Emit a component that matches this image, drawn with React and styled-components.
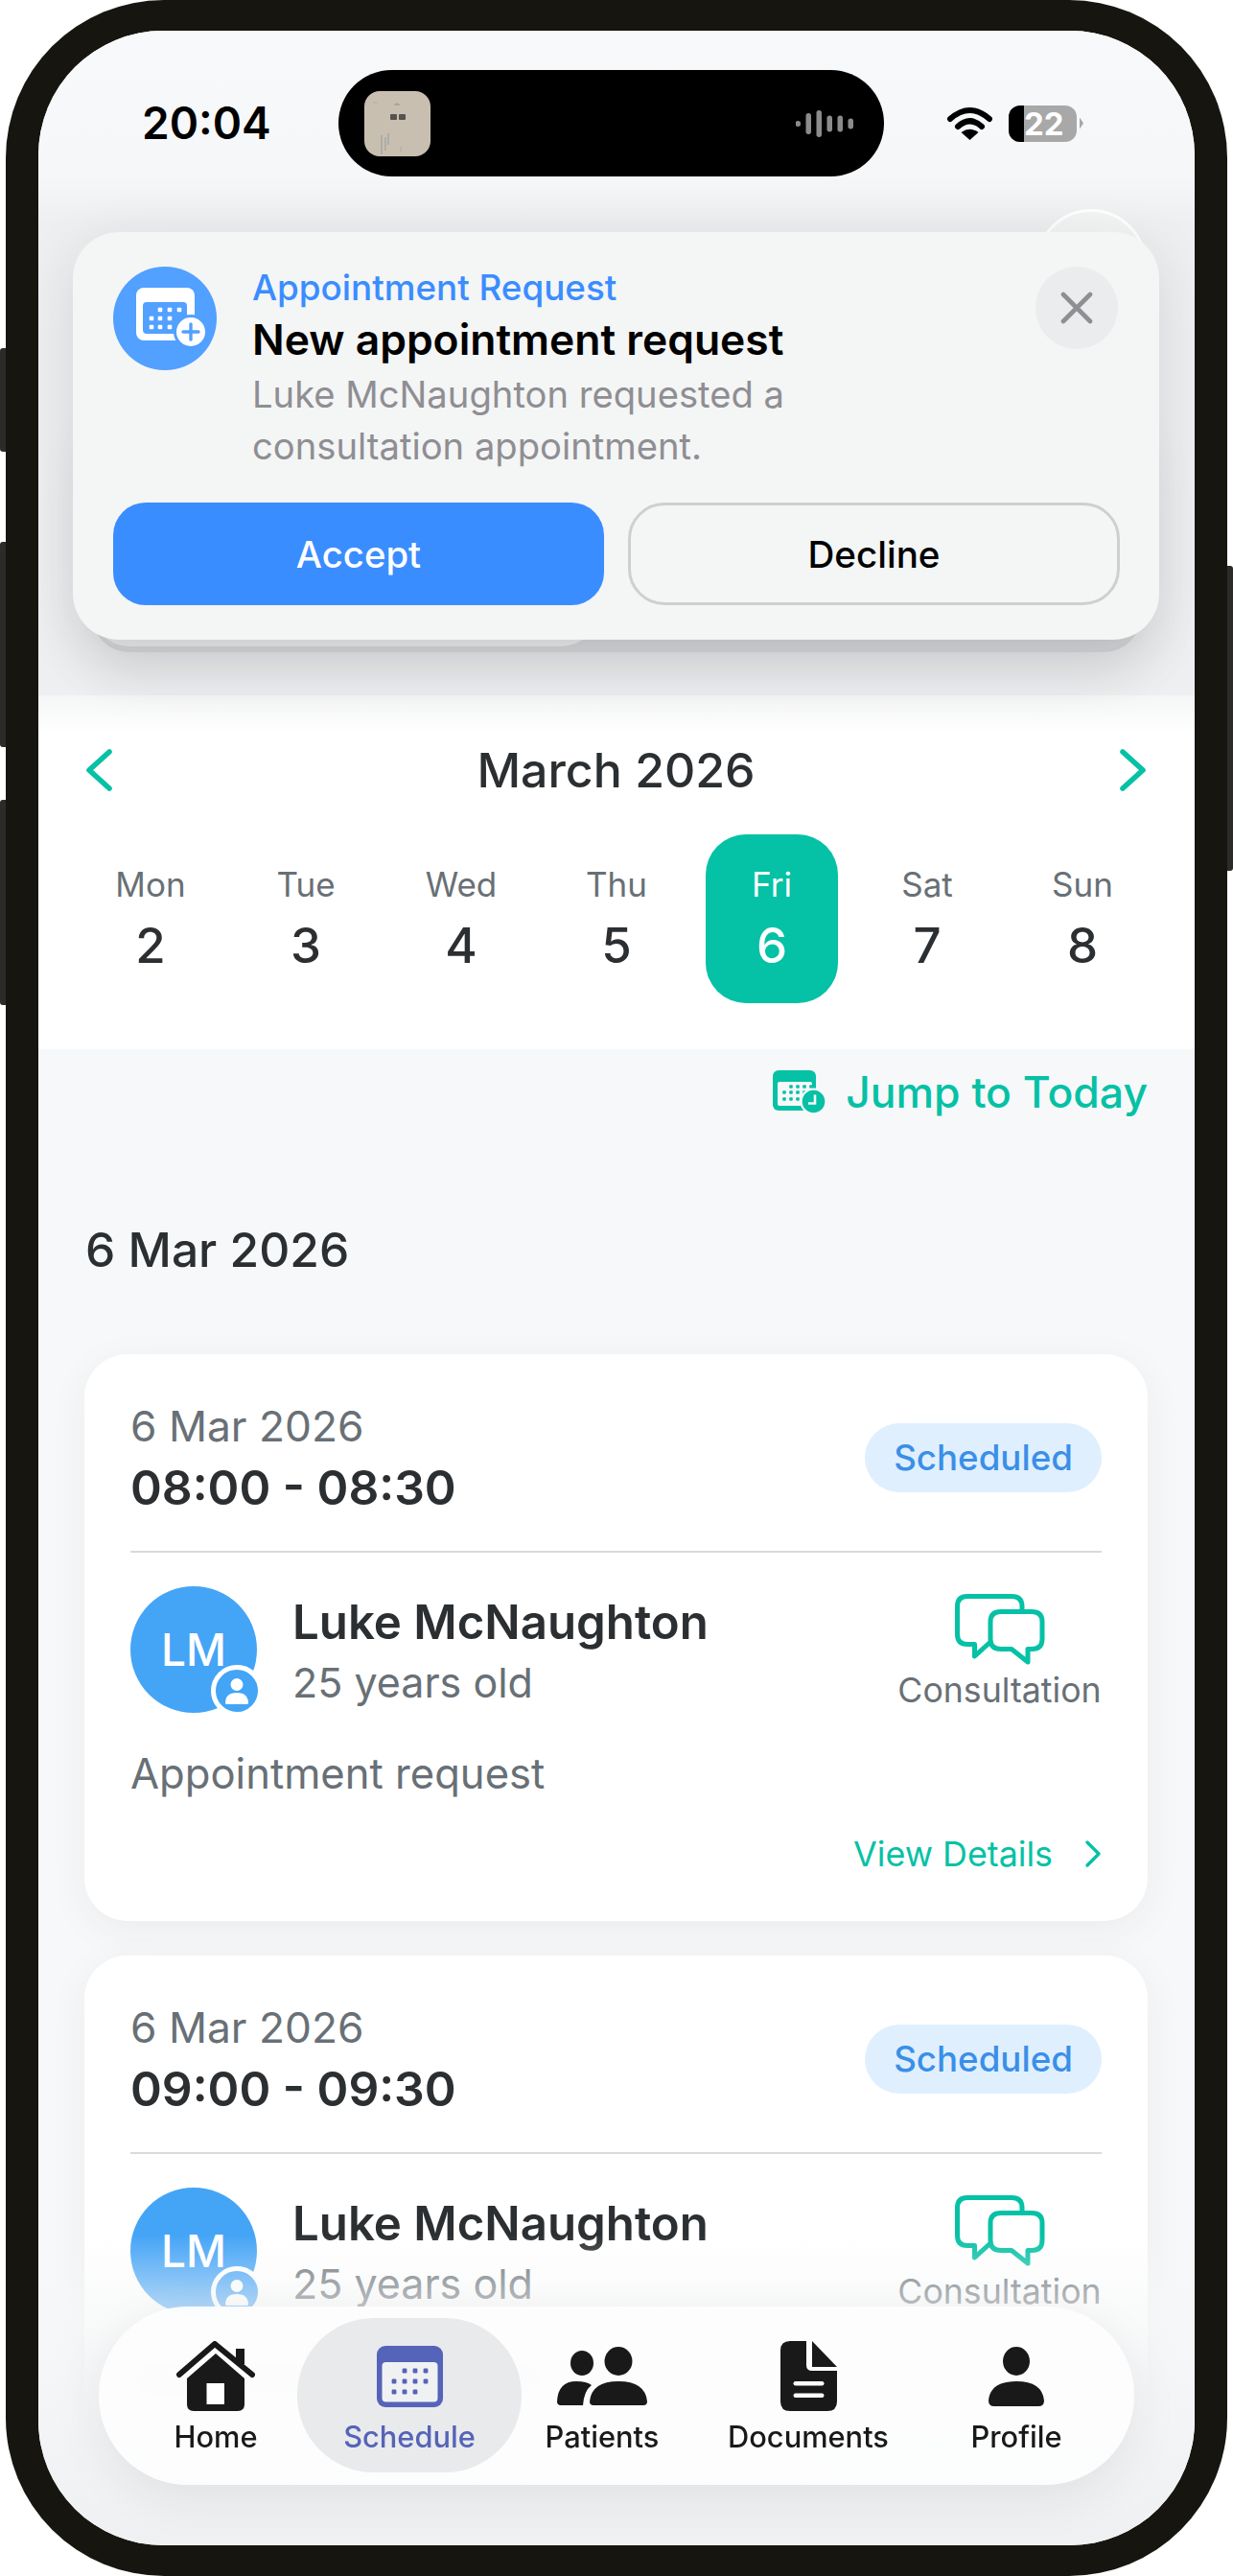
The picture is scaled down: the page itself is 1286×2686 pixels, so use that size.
import React from 'react';
import styled, { createGlobalStyle } from 'styled-components';

const teal = '#05c1a5';
const blue = '#3a8dff';
const ink = '#2c2f31';
const slate = '#687076';

const GlobalStyle = createGlobalStyle`
    html, body {
        margin: 0;
        padding: 0;
        background: #fff;
    }
    * {
        box-sizing: border-box;
    }
    body {
        font-family: Inter, "Noto Sans", sans-serif;
    }
`;

const days = [
    { name: 'Mon', num: 2 },
    { name: 'Tue', num: 3 },
    { name: 'Wed', num: 4 },
    { name: 'Thu', num: 5 },
    { name: 'Fri', num: 6, active: true },
    { name: 'Sat', num: 7 },
    { name: 'Sun', num: 8 },
];

const appointments = ['08:00 - 08:30', '09:00 - 09:30'];

function WifiIcon() {
    return (
        <svg width="47" height="35" viewBox="0 0 47 35">
            <path d="M3 13 Q23.5 -5 44 13" fill="none" stroke="#000" strokeWidth="6" strokeLinecap="round" />
            <path d="M11 21 Q23.5 9.5 36 21" fill="none" stroke="#000" strokeWidth="6" strokeLinecap="round" />
            <path d="M23.5 35 L14.5 27 Q23.5 20.5 32.5 27 Z" fill="#000" />
        </svg>
    );
}

function WaveIcon() {
    const bars = [[2, 6], [13, 22], [24, 28], [35, 17], [46, 17], [57, 11]];
    return (
        <svg width="62" height="30" viewBox="0 0 62 30">
            {bars.map(([x, h]) => (
                <rect key={x} x={x - 2.5} y={15 - h / 2} width="5.5" height={h} rx="2.7" fill="#8b8b8b" />
            ))}
        </svg>
    );
}

function ThumbArt() {
    return (
        <svg width="69" height="68" viewBox="0 0 69 68">
            <rect x="27" y="24" width="7" height="6" rx="1" fill="#55524f" />
            <rect x="36" y="24" width="7" height="6" rx="1" fill="#55524f" />
            <path d="M31 14 h6 M34 12 v3" stroke="#a8a39a" strokeWidth="1.4" />
            <path d="M18 66 V46 M22 62 V48 M25 56 V44" stroke="#a9a8a6" strokeWidth="1.6" />
            <path d="M38 58 v5 M9 12 h5" stroke="#b3ac9f" strokeWidth="1.2" />
        </svg>
    );
}

function CalendarPlusIcon() {
    const dots = [[49, 45], [59, 45], [69, 45], [40, 54], [49, 54], [59, 54], [40, 63], [49, 63], [59, 63]];
    return (
        <svg width="108" height="108" viewBox="0 0 108 108">
            <circle cx="54" cy="54" r="54" fill="#52a0ff" />
            <rect x="24" y="22" width="61" height="55" rx="8" fill="#fff" />
            <rect x="31" y="37" width="46" height="33" rx="4" fill="#52a0ff" />
            {dots.map(([x, y]) => (
                <rect key={`${x}-${y}`} x={x - 2.3} y={y - 2.3} width="4.6" height="4.6" rx="1" fill="#fff" />
            ))}
            <circle cx="81" cy="68" r="18" fill="#52a0ff" />
            <circle cx="81" cy="68" r="15" fill="#fff" />
            <path d="M81 60 V76 M73 68 H89" stroke="#52a0ff" strokeWidth="3.4" strokeLinecap="round" />
        </svg>
    );
}

function CloseIcon() {
    return (
        <svg width="34" height="34" viewBox="0 0 34 34">
            <path d="M3 3 L31 31 M31 3 L3 31" stroke="#8e8e93" strokeWidth="4.6" strokeLinecap="round" />
        </svg>
    );
}

function Chevron({ left, size = 44, width = 27, stroke = 5.6 }) {
    return (
        <svg width={width} height={size} viewBox={`0 0 ${width} ${size}`}>
            <path
                d={left
                    ? `M${width - 3} 3 L3 ${size / 2} L${width - 3} ${size - 3}`
                    : `M3 3 L${width - 3} ${size / 2} L3 ${size - 3}`}
                fill="none"
                stroke={teal}
                strokeWidth={stroke}
                strokeLinecap="round"
                strokeLinejoin="round"
            />
        </svg>
    );
}

function JumpIcon() {
    const dots = [[19, 17], [26, 17], [33, 17], [40, 17], [12, 23], [19, 23], [26, 23], [33, 23], [12, 30], [19, 30], [26, 30]];
    return (
        <svg width="56" height="46" viewBox="0 0 56 46">
            <rect x="0" y="0" width="45" height="42" rx="6" fill={teal} />
            <rect x="5" y="12" width="36" height="25" rx="2" fill="#f7f8fa" />
            {dots.map(([x, y]) => (
                <rect key={`${x}-${y}`} x={x - 1.8} y={y - 1.8} width="3.6" height="3.6" rx="1" fill={teal} />
            ))}
            <circle cx="42.5" cy="32.5" r="14" fill="#f7f8fa" />
            <circle cx="42.5" cy="32.5" r="11.8" fill={teal} />
            <path d="M44 25.5 V34.5 H37" fill="none" stroke="#f7f8fa" strokeWidth="2.6" />
        </svg>
    );
}

function ChatIcon() {
    return (
        <svg width="94" height="74" viewBox="0 0 94 74">
            <g fill="none" stroke={teal} strokeWidth="5" strokeLinecap="round" strokeLinejoin="round">
                <path d="M70 17 V13 Q70 2.5 59 2.5 H13 Q2.5 2.5 2.5 13 V42 Q2.5 52.5 13 52.5 H20.5 V65 L36 51" />
                <path d="M48 18.5 H80 Q91 18.5 91 29 V47 Q91 57.5 80 57.5 H76 V71 L59 57.5 H48 Q37 57.5 37 47 V29 Q37 18.5 48 18.5 Z" />
            </g>
        </svg>
    );
}

function PersonBadgeIcon() {
    return (
        <svg width="26" height="28" viewBox="0 0 26 28">
            <circle cx="13" cy="7.5" r="6.5" fill="#fff" />
            <path d="M1 27 Q1 16 13 16 Q25 16 25 27 Q25 28 23 28 H3 Q1 28 1 27 Z" fill="#fff" />
        </svg>
    );
}

function HomeIcon() {
    return (
        <svg width="82" height="73" viewBox="0 0 82 73">
            <path d="M41 13 L71 39 V66 Q71 73 64 73 H18 Q11 73 11 66 V39 Z" fill="#191919" />
            <rect x="62" y="8" width="9" height="16" fill="#191919" />
            <path d="M3 35 L40 3 L79 35" fill="none" stroke="#191919" strokeWidth="6" strokeLinecap="round" strokeLinejoin="round" />
            <rect x="31.5" y="44" width="18.5" height="22" fill="#fff" />
        </svg>
    );
}

function ScheduleIcon() {
    const dots = [[29, 26], [40, 26], [51, 26], [18, 37], [29, 37], [40, 37], [51, 37], [18, 48], [29, 48], [40, 48]];
    return (
        <svg width="69" height="64" viewBox="0 0 69 64">
            <rect x="0" y="0" width="69" height="64" rx="9" fill="#5563b8" />
            <rect x="5.5" y="17" width="58" height="41.5" rx="4" fill="#f0f1f3" />
            {dots.map(([x, y]) => (
                <rect key={`${x}-${y}`} x={x - 2.4} y={y - 2.4} width="4.8" height="4.8" rx="1.2" fill="#5563b8" />
            ))}
        </svg>
    );
}

function PatientsIcon() {
    return (
        <svg width="95" height="61" viewBox="0 0 95 61">
            <ellipse cx="26" cy="17" rx="12" ry="13" fill="#191919" />
            <ellipse cx="64" cy="15" rx="14.5" ry="15" fill="#191919" />
            <path d="M0 57 Q1 36 20 36 Q31 36 36 40 Q28 46 27 61 H4 Q0 61 0 57 Z" fill="#191919" />
            <path d="M34 57 Q36 36 64 36 Q92 36 94 57 Q94 61 90 61 H38 Q34 61 34 57 Z" fill="#191919" />
        </svg>
    );
}

function DocumentIcon() {
    return (
        <svg width="59" height="73" viewBox="0 0 59 73">
            <path d="M10 0 H27 V25 Q27 31 33 31 H59 V63 Q59 73 49 73 H10 Q0 73 0 63 V10 Q0 0 10 0 Z" fill="#191919" />
            <path d="M33 0 L59 27 H33 Z" fill="#191919" />
            <rect x="13.5" y="42" width="32" height="4.6" rx="2.3" fill="#fff" />
            <rect x="13.5" y="54.5" width="32" height="4.6" rx="2.3" fill="#fff" />
        </svg>
    );
}

function ProfileIcon() {
    return (
        <svg width="58" height="62" viewBox="0 0 58 62">
            <ellipse cx="29" cy="15" rx="14" ry="15" fill="#191919" />
            <path d="M0 56 Q2 36 29 36 Q56 36 58 56 Q58 62 52 62 H6 Q0 62 0 56 Z" fill="#191919" />
        </svg>
    );
}

const navItems = [
    { label: 'Home', icon: <HomeIcon /> },
    { label: 'Schedule', icon: <ScheduleIcon />, active: true },
    { label: 'Patients', icon: <PatientsIcon /> },
    { label: 'Documents', icon: <DocumentIcon /> },
    { label: 'Profile', icon: <ProfileIcon /> },
];

function AppointmentCard({ time }) {
    return (
        <Card>
            <CardHead>
                <div>
                    <CardDate>6 Mar 2026</CardDate>
                    <CardTime>{time}</CardTime>
                </div>
                <Badge>Scheduled</Badge>
            </CardHead>
            <Divider />
            <PatientRow>
                <Avatar>
                    LM
                    <AvatarBadge><PersonBadgeIcon /></AvatarBadge>
                </Avatar>
                <PatientInfo>
                    <PatientName>Luke McNaughton</PatientName>
                    <PatientAge>25 years old</PatientAge>
                </PatientInfo>
                <TypeBox>
                    <ChatIcon />
                    <TypeLabel>Consultation</TypeLabel>
                </TypeBox>
            </PatientRow>
            <CardNote>Appointment request</CardNote>
            <DetailsLink>
                View Details
                <Chevron size={30} width={18} stroke={3.4} />
            </DetailsLink>
        </Card>
    );
}

export default function App() {
    return (
        <Frame>
            <GlobalStyle />
            <SideButton $top={363} $height={108} />
            <SideButton $top={565} $height={214} />
            <SideButton $top={834} $height={214} />
            <PowerButton />
            <Phone>
                <Screen>
                    <TopArea>
                        <StatusBar>
                            <Clock>20:04</Clock>
                            <Island>
                                <IslandThumb>
                                    <ThumbArt />
                                </IslandThumb>
                                <WaveIcon />
                            </Island>
                            <StatusIcons>
                                <WifiIcon />
                                <Battery>
                                    <BatteryFill />
                                    <BatteryText>22</BatteryText>
                                </Battery>
                                <BatteryTip />
                            </StatusIcons>
                        </StatusBar>
                    </TopArea>

                    <Calendar>
                        <MonthRow>
                            <Chevron left />
                            <MonthTitle>March 2026</MonthTitle>
                            <Chevron />
                        </MonthRow>
                        <DayGrid>
                            {days.map((d) => (
                                <DayCell key={d.name} $active={d.active}>
                                    <DayName $active={d.active}>{d.name}</DayName>
                                    <DayNum $active={d.active}>{d.num}</DayNum>
                                </DayCell>
                            ))}
                        </DayGrid>
                    </Calendar>

                    <Content>
                        <JumpRow>
                            <JumpIcon />
                            <JumpText>Jump to Today</JumpText>
                        </JumpRow>
                        <DateHeading>6 Mar 2026</DateHeading>
                        <CardList>
                            {appointments.map((t) => (
                                <AppointmentCard key={t} time={t} />
                            ))}
                        </CardList>
                    </Content>

                    <PeekCircle />
                    <BackCard />
                    <BackCardLip />
                    <Notice>
                        <NoticeTop>
                            <CalendarPlusIcon />
                            <NoticeText>
                                <NoticeKicker>Appointment Request</NoticeKicker>
                                <NoticeTitle>New appointment request</NoticeTitle>
                                <NoticeBody>
                                    Luke McNaughton requested a<br />
                                    consultation appointment.
                                </NoticeBody>
                            </NoticeText>
                            <CloseButton><CloseIcon /></CloseButton>
                        </NoticeTop>
                        <NoticeActions>
                            <AcceptButton>Accept</AcceptButton>
                            <DeclineButton>Decline</DeclineButton>
                        </NoticeActions>
                    </Notice>

                    <BottomFade />
                    <TabBar>
                        {navItems.map((item) => (
                            <TabItem key={item.label} $active={item.active}>
                                <TabIcon>{item.icon}</TabIcon>
                                <TabLabel $active={item.active}>{item.label}</TabLabel>
                            </TabItem>
                        ))}
                    </TabBar>
                </Screen>
            </Phone>
        </Frame>
    );
}

const Frame = styled.div`
    position: relative;
    width: 1286px;
    height: 2686px;
    padding: 0 6px;
    background: #fff;
    overflow: hidden;
`;

const SideButton = styled.div`
    position: absolute;
    left: 0;
    top: ${(p) => p.$top}px;
    width: 8px;
    height: ${(p) => p.$height}px;
    background: #2b2b29;
    border-radius: 3px 0 0 3px;
`;

const PowerButton = styled.div`
    position: absolute;
    right: 0;
    top: 590px;
    width: 8px;
    height: 318px;
    background: #2b2b29;
    border-radius: 0 3px 3px 0;
`;

const Phone = styled.div`
    position: relative;
    width: 1274px;
    height: 2686px;
    padding: 32px 34px;
    background: #161510;
    border-radius: 165px;
`;

const Screen = styled.div`
    position: relative;
    display: flex;
    flex-direction: column;
    height: 2622px;
    background: #f7f8fa;
    border-radius: 130px;
    overflow: hidden;
`;

const TopArea = styled.div`
    flex: none;
    height: 693px;
    background: linear-gradient(#f8f9fb 0, #f6f7f8 150px, #eeeff0 200px);
`;

const StatusBar = styled.div`
    display: flex;
    align-items: center;
    padding: 41px 0 0 108px;
`;

const Clock = styled.div`
    width: 205px;
    font-size: 46px;
    line-height: 111px;
    font-weight: 600;
    color: #000;
`;

const Island = styled.div`
    display: flex;
    align-items: center;
    justify-content: space-between;
    width: 569px;
    height: 111px;
    padding: 0 30px 0 27px;
    background: #000;
    border-radius: 56px;
`;

const IslandThumb = styled.div`
    width: 69px;
    height: 68px;
    background: #c8bfb0;
    border-radius: 16px;
    overflow: hidden;
`;

const StatusIcons = styled.div`
    display: flex;
    align-items: center;
    margin-left: 66px;
`;

const Battery = styled.div`
    position: relative;
    display: flex;
    align-items: center;
    width: 71px;
    height: 38px;
    margin-left: 17px;
    padding-left: 16px;
    background: #a8a8a8;
    border-radius: 12px;
    overflow: hidden;
`;

const BatteryFill = styled.div`
    position: absolute;
    left: 0;
    top: 0;
    bottom: 0;
    width: 16px;
    background: #000;
`;

const BatteryText = styled.span`
    position: relative;
    font-size: 33px;
    line-height: 38px;
    font-weight: 700;
    color: #fff;
`;

const BatteryTip = styled.div`
    width: 4px;
    height: 12px;
    margin-left: 3px;
    background: #a8a8a8;
    clip-path: polygon(0 0, 100% 50%, 0 100%);
`;

const Calendar = styled.section`
    flex: none;
    height: 369px;
    padding-top: 46px;
    background: linear-gradient(#f5f6f6 0, #fff 40px);
`;

const MonthRow = styled.div`
    display: flex;
    align-items: center;
    justify-content: space-between;
    height: 64px;
    padding: 0 51px 0 50px;
`;

const MonthTitle = styled.h2`
    margin: 0;
    font-size: 50px;
    line-height: 64px;
    font-weight: 500;
    color: ${ink};
`;

const DayGrid = styled.div`
    display: grid;
    grid-template-columns: repeat(7, 162px);
    margin-top: 35px;
    padding-left: 36px;
`;

const DayCell = styled.div`
    display: flex;
    flex-direction: column;
    align-items: center;
    justify-self: center;
    width: 138px;
    height: 176px;
    padding-top: 30px;
    background: ${(p) => (p.$active ? teal : 'transparent')};
    border-radius: 42px;
`;

const DayName = styled.span`
    font-size: 35px;
    line-height: 44px;
    color: ${(p) => (p.$active ? '#fff' : slate)};
`;

const DayNum = styled.span`
    margin-top: 10px;
    font-size: 51px;
    line-height: 64px;
    font-weight: 500;
    color: ${(p) => (p.$active ? '#fff' : ink)};
`;

const Content = styled.main`
    flex: none;
    padding: 22px 49px 0 48px;
`;

const JumpRow = styled.div`
    display: flex;
    align-items: center;
    justify-content: flex-end;
    gap: 20px;
    height: 46px;
`;

const JumpText = styled.span`
    font-size: 44.5px;
    line-height: 46px;
    font-weight: 500;
    color: ${teal};
`;

const DateHeading = styled.h3`
    margin: 111px 0 0;
    padding-left: 1px;
    font-size: 49.7px;
    line-height: 60px;
    font-weight: 500;
    color: ${ink};
`;

const CardList = styled.div`
    display: flex;
    flex-direction: column;
    gap: 36px;
    margin-top: 79px;
`;

const Card = styled.article`
    height: 591px;
    padding: 42.5px 48px 0;
    background: #fff;
    border-radius: 45px;
    box-shadow: 0 10px 40px rgba(40, 45, 50, 0.06);
`;

const CardHead = styled.div`
    display: flex;
    align-items: center;
    justify-content: space-between;
`;

const CardDate = styled.div`
    font-size: 44.3px;
    line-height: 64px;
    color: ${slate};
`;

const CardTime = styled.div`
    font-size: 49.8px;
    line-height: 64px;
    font-weight: 600;
    color: ${ink};
`;

const Badge = styled.span`
    display: flex;
    align-items: center;
    justify-content: center;
    width: 247px;
    height: 72px;
    margin-top: 2px;
    background: #e0effe;
    border-radius: 36px;
    font-size: 36.7px;
    font-weight: 500;
    color: #3a8fe8;
`;

const Divider = styled.hr`
    height: 2px;
    margin: 34px 0 35px;
    border: 0;
    background: #d8dadc;
`;

const PatientRow = styled.div`
    display: flex;
    align-items: flex-start;
    gap: 37px;
`;

const Avatar = styled.div`
    position: relative;
    display: flex;
    align-items: center;
    justify-content: center;
    flex: none;
    width: 132px;
    height: 132px;
    background: #44a4f6;
    border-radius: 50%;
    font-size: 46px;
    font-weight: 500;
    color: #fff;
`;

const AvatarBadge = styled.div`
    position: absolute;
    left: 84px;
    top: 82px;
    display: flex;
    align-items: center;
    justify-content: center;
    width: 54px;
    height: 54px;
    background: #44a4f6;
    border: 5px solid #fff;
    border-radius: 50%;
`;

const PatientInfo = styled.div`
    flex: 1;
    padding-top: 5px;
`;

const PatientName = styled.div`
    font-size: 49.2px;
    line-height: 64px;
    font-weight: 600;
    color: ${ink};
`;

const PatientAge = styled.div`
    margin-top: 1px;
    font-size: 43px;
    line-height: 60px;
    color: ${slate};
`;

const TypeBox = styled.div`
    display: flex;
    flex-direction: column;
    align-items: center;
    width: 213px;
    padding-top: 8px;
`;

const TypeLabel = styled.span`
    margin-top: 4px;
    font-size: 35.7px;
    line-height: 44px;
    color: ${slate};
`;

const CardNote = styled.div`
    margin-top: 34px;
    font-size: 43.6px;
    line-height: 60px;
    color: ${slate};
`;

const DetailsLink = styled.div`
    display: flex;
    align-items: center;
    justify-content: flex-end;
    gap: 33px;
    margin-top: 31px;
    font-size: 35.8px;
    line-height: 44px;
    color: ${teal};
`;

const PeekCircle = styled.div`
    position: absolute;
    left: 1040px;
    top: 186px;
    width: 116px;
    height: 116px;
    background: #f3f4f4;
    border: 3px solid #fff;
    border-radius: 50%;
`;

const BackCard = styled.div`
    position: absolute;
    left: 55px;
    top: 400px;
    width: 1096px;
    height: 248px;
    background: #cfd0d2;
    border-radius: 40px;
    box-shadow: 0 20px 60px rgba(30, 35, 45, 0.1);
`;

const BackCardLip = styled.div`
    position: absolute;
    left: 55px;
    top: 400px;
    width: 530px;
    height: 242px;
    background: #e3e4e5;
    border-radius: 40px;
`;

const Notice = styled.div`
    position: absolute;
    left: 36px;
    top: 210px;
    width: 1133px;
    height: 425px;
    padding: 36px 41px 0 42px;
    background: #f4f5f5;
    border-radius: 48px;
    box-shadow: 0 14px 60px rgba(30, 35, 45, 0.12);
`;

const NoticeTop = styled.div`
    display: flex;
    align-items: flex-start;
    gap: 37px;
`;

const NoticeText = styled.div`
    flex: 1;
`;

const NoticeKicker = styled.div`
    font-size: 36.8px;
    line-height: 44px;
    font-weight: 500;
    color: ${blue};
`;

const NoticeTitle = styled.div`
    margin-top: 4px;
    font-size: 44.4px;
    line-height: 56px;
    font-weight: 600;
    color: #000;
`;

const NoticeBody = styled.div`
    margin-top: 2px;
    font-size: 38.2px;
    line-height: 54px;
    color: #8e8e93;
`;

const CloseButton = styled.div`
    display: flex;
    align-items: center;
    justify-content: center;
    flex: none;
    width: 86px;
    height: 86px;
    margin-right: 2px;
    background: #ebeced;
    border-radius: 50%;
`;

const NoticeActions = styled.div`
    display: grid;
    grid-template-columns: 512px 513px;
    gap: 25px;
    margin-top: 32px;
`;

const AcceptButton = styled.div`
    display: flex;
    align-items: center;
    justify-content: center;
    height: 107px;
    background: ${blue};
    border-radius: 34px;
    font-size: 38.3px;
    font-weight: 500;
    color: #fff;
`;

const DeclineButton = styled.div`
    display: flex;
    align-items: center;
    justify-content: center;
    height: 107px;
    background: transparent;
    border: 3px solid #cfcfcf;
    border-radius: 38px;
    font-size: 38.6px;
    font-weight: 500;
    color: #000;
`;

const BottomFade = styled.div`
    position: absolute;
    left: 0;
    right: 0;
    bottom: 0;
    height: 324px;
    background: linear-gradient(
        rgba(246, 247, 248, 0) 0,
        rgba(246, 247, 248, 0.6) 75px,
        rgba(243, 244, 245, 0.97) 200px,
        #eff0f1 100%
    );
`;

const TabBar = styled.nav`
    position: absolute;
    left: 63px;
    top: 2373px;
    display: grid;
    grid-template-columns: 170px 234px 168px 262px 172px;
    width: 1080px;
    height: 186px;
    padding: 12px 37px 0 37px;
    background: rgba(253, 253, 253, 0.93);
    backdrop-filter: blur(14px);
    border-radius: 93px;
    box-shadow: 0 14px 50px rgba(30, 35, 45, 0.08);
`;

const TabItem = styled.div`
    display: flex;
    flex-direction: column;
    align-items: center;
    height: 161px;
    padding-top: 24px;
    background: ${(p) => (p.$active ? '#e9eaec' : 'transparent')};
    border-radius: 80px;
`;

const TabIcon = styled.div`
    display: flex;
    align-items: center;
    justify-content: center;
    height: 73px;
`;

const TabLabel = styled.span`
    margin-top: 7px;
    font-size: 30.8px;
    line-height: 40px;
    font-weight: 500;
    color: ${(p) => (p.$active ? '#5563b8' : '#191919')};
`;
